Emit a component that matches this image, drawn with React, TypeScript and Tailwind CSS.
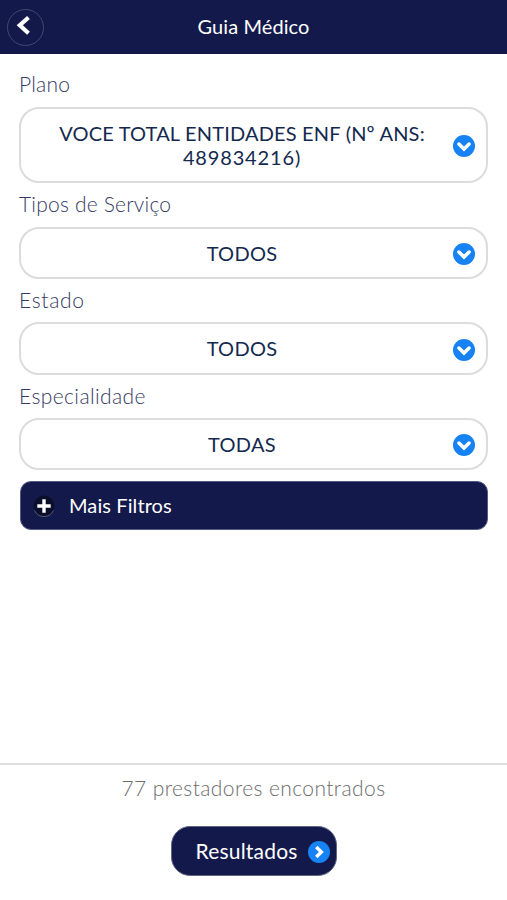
import React from "react";

function Chevron({ right = false }: { right?: boolean }) {
  return (
    <svg width="22" height="22" viewBox="0 0 22 22" className="relative top-px block shrink-0" aria-hidden="true">
      <circle cx="11" cy="11" r="11" fill="#1682f4" />
      <path
        d={right ? "M8.3 6L13.3 11L8.3 16" : "M5.9 9L11 14.1L16.1 9"}
        fill="none"
        stroke="#fff"
        strokeWidth="3.5"
        strokeLinecap={right ? "butt" : "round"}
      />
    </svg>
  );
}

type FieldProps = {
  label: string;
  labelClass: string;
  boxClass: string;
  children: React.ReactNode;
};

function Field({ label, labelClass, boxClass, children }: FieldProps) {
  return (
    <section>
      <div className={`flex items-center whitespace-nowrap pb-[2px] text-[21px] font-light leading-6 text-[#343a64] ${labelClass}`}>
        {label}
      </div>
      <button
        className={`flex w-full items-center rounded-[20px] border-2 border-[#dcdcdc] bg-white pl-[10px] pr-[11px] text-[#14294f] ${boxClass}`}
      >
        <span className="flex-1 pb-px text-center text-[20px] leading-6 tracking-[0.3px]">{children}</span>
        <Chevron />
      </button>
    </section>
  );
}

export default function App() {
  return (
    <main className="flex h-[900px] w-[507px] flex-col bg-white font-['Lato','Open_Sans',sans-serif]">
      <header className="grid h-[54px] shrink-0 grid-cols-[54px_1fr_54px] items-center bg-[#131a4b] text-white">
        <button className="ml-[7px] flex size-[37px] items-center justify-center rounded-full border border-[#414871]">
          <svg width="37" height="37" viewBox="0 0 37 37" className="shrink-0" aria-hidden="true">
            <path d="M21.5 8.5L12.8 16.2L21.5 24.2" fill="none" stroke="#fff" strokeWidth="4.2" />
          </svg>
        </button>
        <h1 className="whitespace-nowrap pb-[2px] text-center text-[20px] leading-6 tracking-[0.1px]">Guia Médico</h1>
      </header>

      <div className="px-[19px]">
        <Field label="Plano" labelClass="h-[53px] pt-[8px] tracking-[0.2px]" boxClass="h-[76px]">
          <span className="block whitespace-nowrap tracking-[0.18px]">VOCE TOTAL ENTIDADES ENF (Nº ANS:</span>
          <span className="block tracking-[0.85px]">489834216)</span>
        </Field>
        <Field label="Tipos de Serviço" labelClass="h-[44px] tracking-[0.2px]" boxClass="h-[52px]">TODOS</Field>
        <Field label="Estado" labelClass="h-[43px] tracking-[0.7px]" boxClass="h-[53px]">TODOS</Field>
        <Field label="Especialidade" labelClass="h-[43px] tracking-[0.4px]" boxClass="h-[52px]">TODAS</Field>
        <button className="mx-px mt-[11px] flex h-[49px] w-[468px] items-center rounded-[11px] border border-[#535a83] bg-[#131a4b] pl-[12px] text-white">
          <svg width="22" height="22" viewBox="0 0 22 22" aria-hidden="true">
            <circle cx="11" cy="11" r="10.5" fill="#0b0f2c" />
            <path d="M1.5 15.5A10.5 10.5 0 0 0 20.5 15.5" fill="none" stroke="#6a6f8c" strokeWidth=".8" />
            <path d="M11 4.3V17.7M4.3 11H17.7" fill="none" stroke="#fff" strokeWidth="3.4" />
          </svg>
          <span className="ml-[14px] whitespace-nowrap pb-[2px] text-[20px] leading-6 tracking-[0.1px]">Mais Filtros</span>
        </button>
      </div>

      <footer className="mt-auto flex h-[137px] flex-col items-center border-t-2 border-[#dedede] pt-[11px]">
        <p className="whitespace-nowrap text-[21px] font-light leading-6 tracking-[0.4px] text-[#6c6c6c]">77 prestadores encontrados</p>
        <button className="mt-[26px] flex h-[50px] w-[166px] items-center justify-between rounded-[19px] border border-[#606684] bg-[#131a4b] pl-[24px] pr-[6px] text-white">
          <span className="whitespace-nowrap text-[21px] leading-6 tracking-[0.2px]">Resultados</span>
          <Chevron right />
        </button>
      </footer>
    </main>
  );
}
